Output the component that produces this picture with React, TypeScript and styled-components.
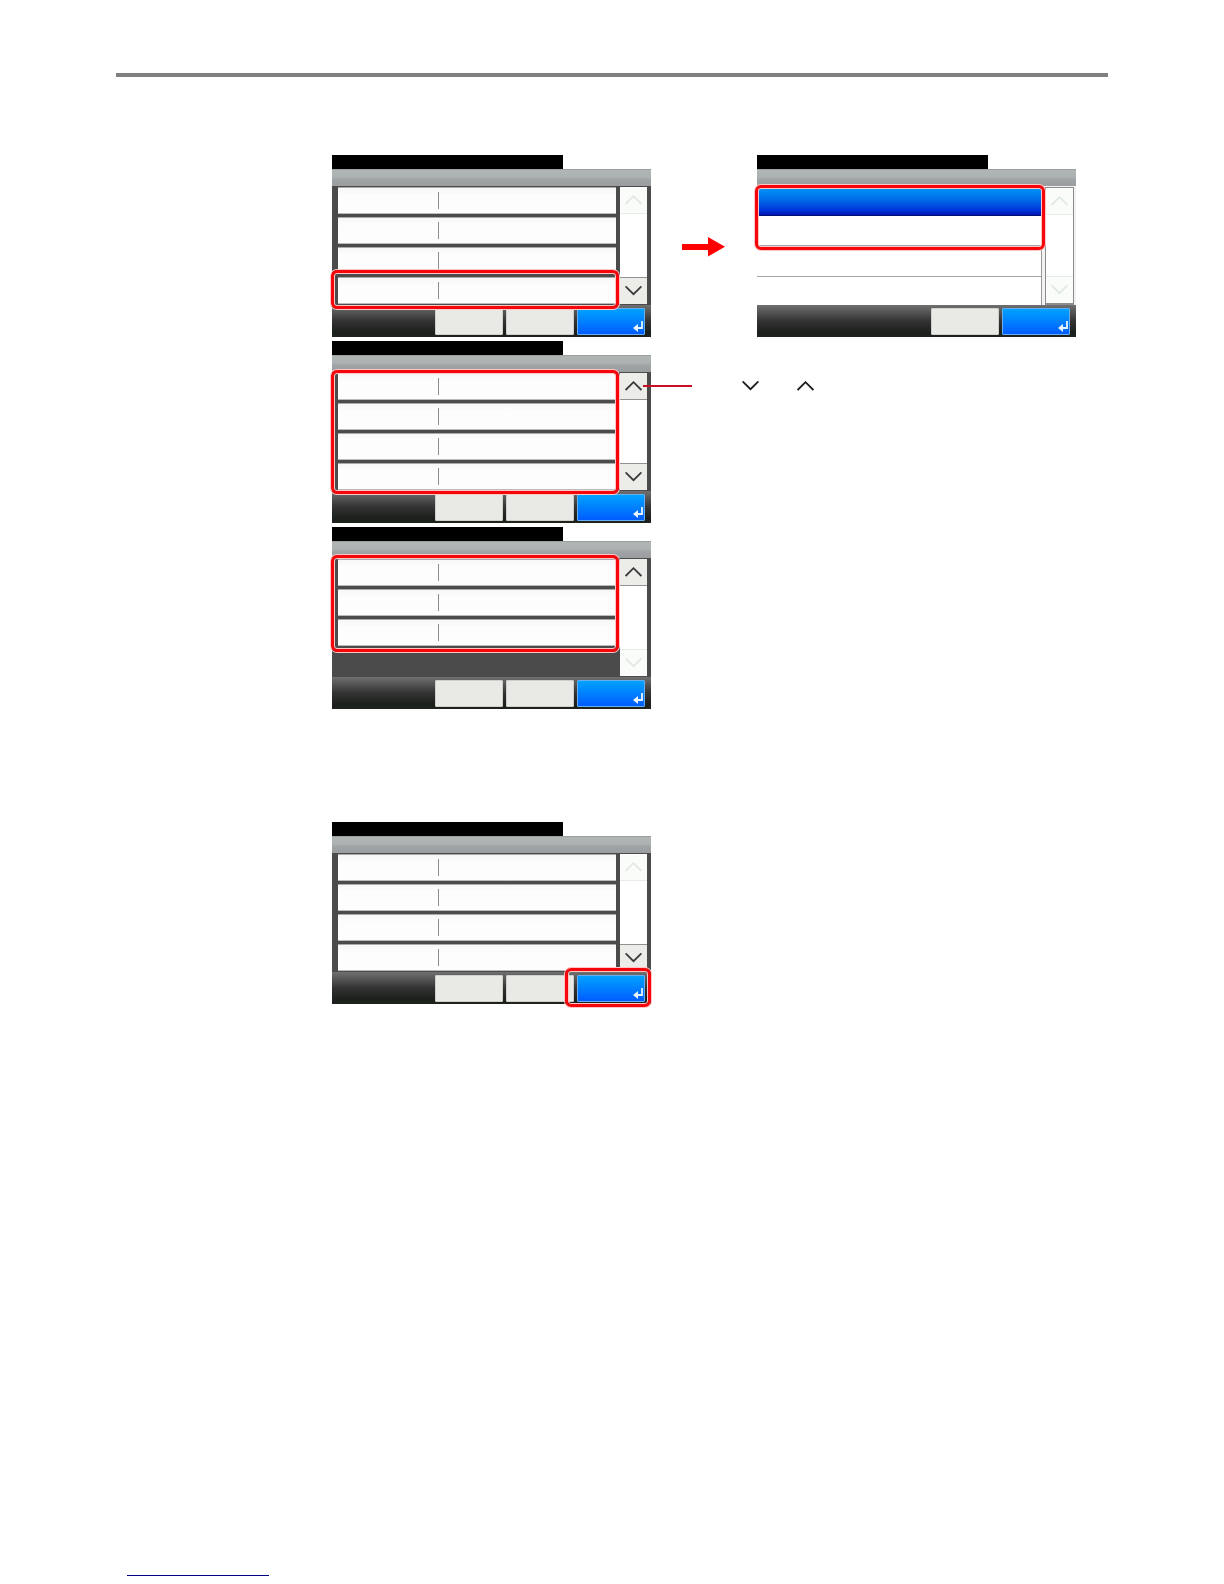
import React from 'react';
import styled, { createGlobalStyle } from 'styled-components';

const GlobalStyle = createGlobalStyle`
  * { box-sizing: border-box; }
  body { margin: 0; background: #fff; font-family: "Liberation Sans", Arial, sans-serif; }
`;

const Page = styled.main`
  display: flex;
  flex-direction: column;
  min-height: 100vh;
  padding: 73px 116px 8px;
`;

const Rule = styled.hr`
  width: 100%;
  height: 4px;
  margin: 0 0 78px;
  border: 0;
  background: #808080;
`;

const Figure = styled.section`
  display: grid;
  grid-template-columns: 319px 106px 319px;
  row-gap: 4px;
  margin: 0 0 113px 216px;
`;

const Panel = styled.article`
  position: relative;
  grid-column: ${(p: { $column?: number }) => p.$column ?? 1};
  display: flex;
  flex-direction: column;
  height: 182px;
`;

const TitleBar = styled.div`
  width: 231px;
  height: 14px;
  background: #000;
`;

const StatusBar = styled.div`
  height: 17px;
  border-top: 1px solid #9da09f;
  background: linear-gradient(#b0b6b5, #acb1b1 45%, #9fa3a6 60%, #9a9e9f);
`;

const Body = styled.div<{ $light?: boolean }>`
  display: flex;
  justify-content: space-between;
  height: 119px;
  padding: ${(p) => (p.$light ? '1px 2px 0 0' : '1px 4px 1px 6px')};
  background: ${(p) => (p.$light ? '#f2f2f2' : '#4b4b4b')};
`;

const Rows = styled.div`
  display: grid;
  grid-template-rows: repeat(4, 1fr);
  gap: 3px;
  width: 278px;
`;

const Row = styled.button`
  display: flex;
  padding: 4px 0 0 100px;
  border: 0;
  border-top: 1px solid #aaa;
  border-bottom: 1px solid #bbb;
  background: linear-gradient(#f7f7f7, #fdfdfd 30%);
`;

const Divider = styled.span`
  width: 1px;
  height: 17px;
  background: #8c8c8c;
`;

const Choices = styled.div`
  display: grid;
  grid-template-rows: 29px 30px 31px 1fr;
  width: 285px;
  border-right: 1px solid #999;
  background: #fff;
`;

const Choice = styled.button<{ $selected?: boolean; $last?: boolean }>`
  margin: ${(p) => (p.$selected ? '1px 0 0 2px' : '0')};
  padding: 0;
  border: 0;
  border-bottom: ${(p) => (p.$last ? '0' : p.$selected ? '1px solid #001070' : '1px solid #a5a5a5')};
  background: ${(p) => (p.$selected ? 'linear-gradient(#0094f8, #006ae8 45%, #0038dc 80%, #0018b4)' : '#fff')};
`;

const Scroll = styled.div<{ $framed?: boolean }>`
  display: flex;
  flex-direction: column;
  justify-content: space-between;
  width: ${(p) => (p.$framed ? '29px' : '27px')};
  border: ${(p) => (p.$framed ? '1px solid #8c8c8c' : '0')};
  border-bottom-width: ${(p) => (p.$framed ? '2px' : '0')};
  background: #fff;
`;

const ScrollButton = styled.button<{ $down?: boolean }>`
  display: grid;
  place-items: center;
  height: 27px;
  padding: 0;
  border: 0;
  border-${(p) => (p.$down ? 'top' : 'bottom')}: 1px solid #929292;
  background: #ecece8;
  color: #3b3b3b;

  &:disabled {
    border-color: #e8ece8;
    background: #fafcfa;
    color: #e1eae1;
  }
`;

const ActionBar = styled.div`
  display: flex;
  justify-content: flex-end;
  gap: 3px;
  height: 32px;
  padding: 3px 6px 2px 0;
  background: linear-gradient(#707070, #333 50%, #1c201c 85%, #1e231e);
`;

const Action = styled.button<{ $primary?: boolean }>`
  display: flex;
  align-items: flex-end;
  justify-content: flex-end;
  width: 68px;
  padding: 0 1px 2px 0;
  border: 1px solid ${(p) => (p.$primary ? '#66aef0' : '#cfcfcb')};
  border-radius: 1px;
  background: ${(p) => (p.$primary ? 'linear-gradient(#00a2ff, #0080ff 50%, #005cff)' : '#e9e9e5')};
  color: #e8f4ff;
`;

type Area = { left: number; top: number; width: number; height: number };

const Highlight = styled.span<{ $area: Area }>`
  position: absolute;
  left: ${(p) => p.$area.left}px;
  top: ${(p) => p.$area.top}px;
  width: ${(p) => p.$area.width}px;
  height: ${(p) => p.$area.height}px;
  border: 3px solid #f4060b;
  border-radius: 6px;
  box-shadow: 0 0 0 1px #ffc4c4, inset 0 0 0 1px #ffc4c4;
  pointer-events: none;
`;

const Pointer = styled.div`
  display: flex;
  padding: 82px 0 0 31px;
`;

const Callout = styled.div`
  position: relative;
  grid-column: 2 / 4;
  display: flex;
  align-items: center;
  align-self: start;
  height: 12px;
  margin: 39px 0 0 -8px;
`;

const Leader = styled.span`
  width: 49px;
  height: 2px;
  margin-right: 50px;
  background: #c90f24;
`;

const Symbols = styled.span`
  display: flex;
  gap: 38px;
  color: #1d1d1d;
`;

const Footer = styled.footer`
  display: flex;
  margin-top: auto;
  padding-left: 11px;
`;

const FooterLink = styled.a`
  width: 142px;
  height: 16px;
  border-bottom: 1px solid #000080;
`;

function Chevron({ down = false }: { down?: boolean }) {
  return (
    <svg width="17" height="10" viewBox="0 0 17 10" fill="none" stroke="currentColor" strokeWidth="1.8" aria-hidden="true">
      <path d={down ? 'M.6.4 8.5 8.2 16.4.4' : 'M.6 9 8.5 1.2 16.4 9'} />
    </svg>
  );
}

function EnterIcon() {
  return (
    <svg width="10" height="11" viewBox="0 0 10 11" aria-hidden="true">
      <path d="M9 0v7H3.5" fill="none" stroke="currentColor" strokeWidth="1.8" />
      <path d="M0 7l5-4v8z" fill="currentColor" />
    </svg>
  );
}

function Scroller({ up, down, framed }: { up?: boolean; down?: boolean; framed?: boolean }) {
  return (
    <Scroll $framed={framed}>
      <ScrollButton disabled={!up} aria-label="Up"><Chevron /></ScrollButton>
      <ScrollButton $down disabled={!down} aria-label="Down"><Chevron down /></ScrollButton>
    </Scroll>
  );
}

function Actions({ count }: { count: number }) {
  return (
    <ActionBar>
      {Array.from({ length: count }, (_, i) => <Action key={i} aria-label={`Action ${i + 1}`} />)}
      <Action $primary aria-label="Enter"><EnterIcon /></Action>
    </ActionBar>
  );
}

function SettingsPanel({ rows = 4, up, down, area }: { rows?: number; up?: boolean; down?: boolean; area: Area }) {
  return (
    <Panel>
      <TitleBar />
      <StatusBar />
      <Body>
        <Rows>
          {Array.from({ length: rows }, (_, i) => (
            <Row key={i} aria-label={`Setting ${i + 1}`}><Divider /></Row>
          ))}
        </Rows>
        <Scroller up={up} down={down} />
      </Body>
      <Actions count={2} />
      <Highlight $area={area} />
    </Panel>
  );
}

function ChoicePanel({ area }: { area: Area }) {
  return (
    <Panel $column={3}>
      <TitleBar />
      <StatusBar />
      <Body $light>
        <Choices>
          <Choice $selected aria-label="Choice 1" />
          <Choice aria-label="Choice 2" />
          <Choice aria-label="Choice 3" />
          <Choice $last aria-label="Choice 4" />
        </Choices>
        <Scroller framed />
      </Body>
      <Actions count={1} />
      <Highlight $area={area} />
    </Panel>
  );
}

export default function App() {
  return (
    <>
      <GlobalStyle />
      <Page>
        <Rule />
        <Figure>
          <SettingsPanel down area={{ left: -1, top: 115, width: 288, height: 39 }} />
          <Pointer>
            <svg width="43" height="20" viewBox="0 0 43 20" fill="#f00" aria-hidden="true">
              <path d="M0 7h26V0l17 9.7L26 19.5V13H0z" />
            </svg>
          </Pointer>
          <ChoicePanel area={{ left: -2, top: 30, width: 290, height: 65 }} />
          <SettingsPanel up down area={{ left: -1, top: 29, width: 288, height: 124 }} />
          <Callout>
            <Leader />
            <Symbols><Chevron down /><Chevron /></Symbols>
          </Callout>
          <SettingsPanel rows={3} up area={{ left: -1, top: 28, width: 288, height: 97 }} />
        </Figure>
        <Figure>
          <SettingsPanel down area={{ left: 233, top: 146, width: 86, height: 39 }} />
        </Figure>
        <Footer>
          <FooterLink href="#contents" aria-label="Contents" />
        </Footer>
      </Page>
    </>
  );
}
